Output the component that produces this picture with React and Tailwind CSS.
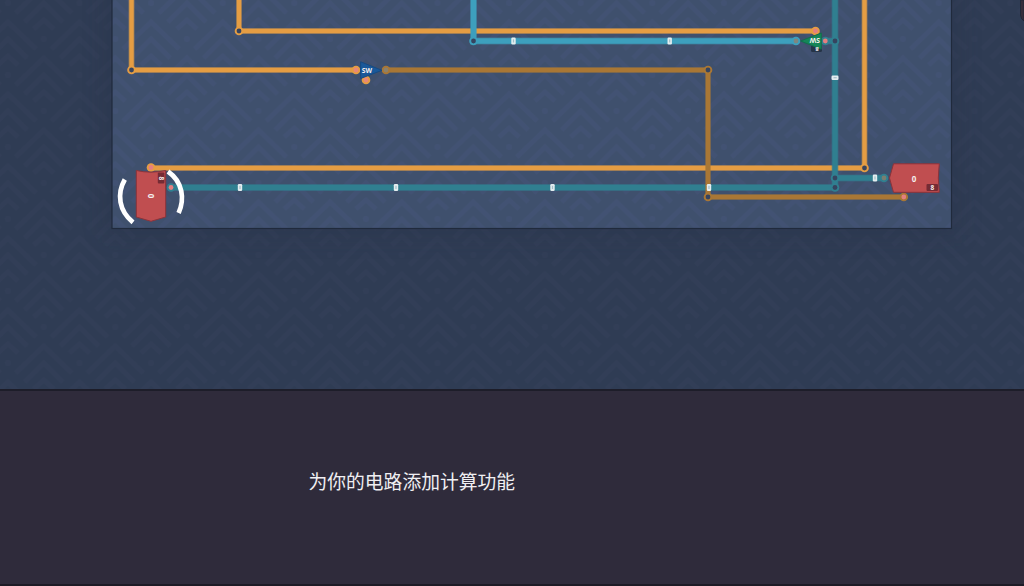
function Chevrons({ id, color }) {
  return (
    <defs>
      <pattern id={id} width="71.6" height="72" patternUnits="userSpaceOnUse" patternTransform="translate(7.9 18)">
        <g fill="none" stroke={color} strokeWidth="4.6">
          {[[0, -72], [0, 0], [71.6, -72], [71.6, 0], [35.8, -36], [35.8, 36], [0, 72], [71.6, 72]].map(([x, y]) => (
            <g key={`${x},${y}`} transform={`translate(${x} ${y})`}>
              <path d="M-28 31L0 4L28 31M-19 40L0 21L19 40M-10 47L0 38L10 47" />
              <circle cx="0" cy="57" r="3" fill={color} stroke="none" />
            </g>
          ))}
        </g>
      </pattern>
    </defs>
  );
}

const ORANGE = "#e59d43";
const BROWN = "#a97735";
const TEAL = "#307f90";
const CYAN = "#3d9fbd";

function Wire({ d, color, width = 5 }) {
  return (
    <>
      <path d={d} fill="none" stroke={color} strokeOpacity="0.45" strokeWidth={width + 1} />
      <path d={d} fill="none" stroke={color} strokeWidth={width - 0.6} />
    </>
  );
}

function Joint({ x, y, color, fill = "#36445f", r = 4.3 }) {
  return (
    <g>
      <circle cx={x} cy={y} r={r} fill={color} />
      <circle cx={x} cy={y} r="2.4" fill={fill} />
    </g>
  );
}

function Bit({ x, y, turned }) {
  return (
    <g transform={`translate(${x} ${y}) rotate(${turned ? 90 : 0})`}>
      <rect x="-2.2" y="-3.5" width="4.4" height="7" rx="1.2" fill="#e4edf0" />
      <rect x="-0.6" y="-1.7" width="1.2" height="3.2" fill="#a4c0c9" />
    </g>
  );
}

function Label({ x, y, size, rotate = 0, children }) {
  return (
    <text
      transform={`translate(${x} ${y}) rotate(${rotate})`}
      textAnchor="middle"
      dominantBaseline="central"
      fontSize={size}
      fill="#f4eeee"
      className="font-['Open_Sans',sans-serif] font-bold"
    >
      {children}
    </text>
  );
}

function Circuit() {
  return (
    <svg width="1024" height="389" viewBox="0 0 1024 389" className="block">
      <Chevrons id="outer" color="#323e57" />
      <Chevrons id="inner" color="#425273" />
      <defs>
        <filter id="shade" x="-10%" y="-30%" width="120%" height="160%">
          <feGaussianBlur stdDeviation="12" />
        </filter>
      </defs>
      <rect width="1024" height="389" fill="#2f3c54" />
      <rect width="1024" height="389" fill="url(#outer)" />
      <rect x="106" y="-30" width="852" height="265" fill="#202a40" opacity="0.25" filter="url(#shade)" />
      <rect x="112" y="-5" width="839.5" height="233.5" fill="#3f506d" />
      <rect x="112" y="-5" width="839.5" height="233.5" fill="url(#inner)" stroke="#202a3c" strokeWidth="1.2" />

      <Wire d="M239 0V31H816" color={ORANGE} />
      <Wire d="M131.5 0V70H356" color={ORANGE} />
      <Wire d="M151 168H864.5V0" color={ORANGE} />
      <Wire d="M473.5 0V41H797" color={CYAN} width={6} />
      <Wire d="M171 187.5H835V0M835 178H884M835 41H825" color={TEAL} width={6} />
      <Wire d="M386 70H708V197H904" color={BROWN} />

      <Joint x={239} y={31} color={ORANGE} />
      <Joint x={131.5} y={70} color={ORANGE} />
      <Joint x={864.5} y={168} color={ORANGE} />
      <Joint x={473.5} y={41} color={CYAN} />
      <Joint x={835} y={41} color={TEAL} />
      <Joint x={835} y={178} color={TEAL} />
      <Joint x={835} y={187.5} color={TEAL} />
      <Joint x={708} y={70} color={BROWN} />
      <Joint x={708} y={197} color={BROWN} />

      <Joint x={151} y={167.5} color={ORANGE} fill="#e47f80" />
      <Joint x={171} y={187.5} color={TEAL} fill="#e47f80" />
      <Joint x={356} y={70} color={ORANGE} fill="#e98779" />
      <Joint x={366} y={80} color={ORANGE} fill="#e98779" />
      <Joint x={386} y={70} color={BROWN} fill="#8c806b" />
      <Joint x={815.5} y={31} color={ORANGE} fill="#e47f80" />
      <Joint x={796} y={41} color={CYAN} fill="#7d8680" />
      <Joint x={825.3} y={41} color={TEAL} fill="#e47f80" />
      <Joint x={884} y={178} color={TEAL} fill="#7a7e70" />
      <Joint x={903.8} y={197} color={BROWN} fill="#e47f80" />

      <Bit x={240} y={187.5} />
      <Bit x={396} y={187.5} />
      <Bit x={552.5} y={187.5} />
      <Bit x={709} y={187.5} />
      <Bit x={875} y={178} />
      <Bit x={513.5} y={41} />
      <Bit x={669.7} y={41} />
      <Bit x={835} y={77.7} turned />

      <path d="M136.3 170.5Q151 173.8 165.7 170.5V217L151 221.3L136.3 217Z" fill="#c04e50" stroke="#8d3339" />
      <rect x="157.8" y="172.5" width="6.6" height="11" rx="1" fill="#752b34" />
      <Label x={161} y={178.3} size="6.5" rotate={90}>8</Label>
      <Label x={151} y={196} size="8" rotate={90}>0</Label>

      <path d="M893.5 163.8H939.3Q937.3 178 939.3 192.3H893.5L889.5 178Z" fill="#c04e50" stroke="#8d3339" />
      <rect x="926.5" y="184" width="11.5" height="7" rx="1" fill="#752b34" />
      <Label x={932.3} y={187.5} size="6.5">8</Label>
      <Label x={914} y={178} size="8">0</Label>

      <path d="M360.6 61.8L382 70.3L360.6 78.5Z" fill="#195899" stroke="#164a82" />
      <Label x={367} y={70.3} size="6.8">SW</Label>

      <rect x="811" y="45" width="11" height="7" rx="1.5" fill="#263447" />
      <path d="M821.3 33L800.5 41L821.3 49.2Z" fill="#158658" stroke="#136e4d" />
      <Label x={814.8} y={40.7} size="6.8" rotate={180}>SW</Label>
      <Label x={817} y={49} size="6" rotate={180}>8</Label>

      <g fill="none" stroke="#ffffff" strokeWidth="4.7">
        <path d="M124.8 179.5C116.5 194 119 211 133 222.3" />
        <path d="M168 171.5C183 182 184.8 199 178.6 213" />
      </g>
      <path d="M1024 0H1020.5V15Q1021 19.5 1024 21Z" fill="#352d3b" stroke="#202738" />
    </svg>
  );
}

export default function App() {
  return (
    <main className="flex h-[586px] w-[1024px] flex-col overflow-hidden bg-[#2f2b3b]">
      <section className="h-[389px] shrink-0">
        <Circuit />
      </section>
      <section className="flex-1 border-t-2 border-b-2 border-t-[#1d1d29] border-b-[#1d1b26] pt-[76px] pl-[308.5px]">
        <p className="font-['Noto_Sans_CJK_SC',sans-serif] text-[18.8px] leading-7 whitespace-nowrap text-[#f0eff2]">
          为你的电路添加计算功能
        </p>
      </section>
    </main>
  );
}
